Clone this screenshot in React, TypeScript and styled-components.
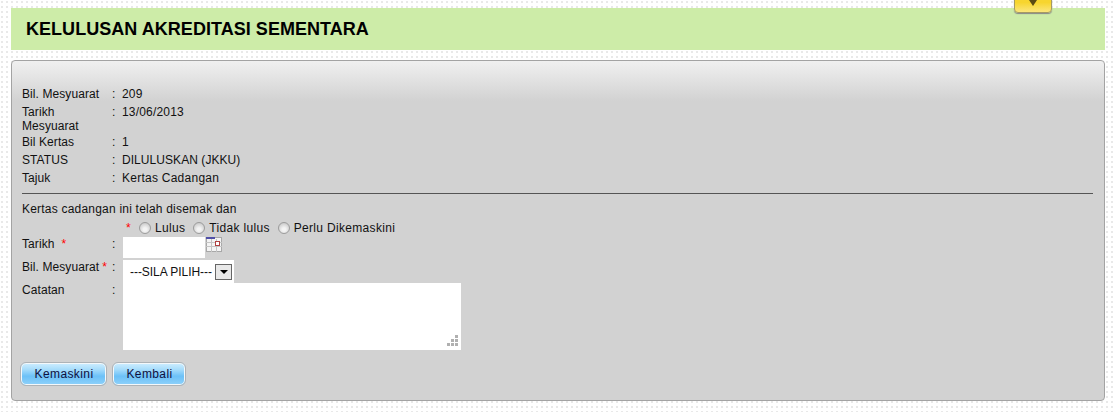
import React from 'react';
import styled, { createGlobalStyle } from 'styled-components';

const GlobalStyle = createGlobalStyle`
  html, body {
    margin: 0;
    padding: 0;
  }
  body {
    font-family: 'Liberation Sans', Arial, sans-serif;
    font-size: 12px;
    letter-spacing: 0.18px;
    color: #111;
    background-color: #fff;
    background-image: radial-gradient(circle at 2px 2px, #e9e9e9 1px, transparent 1.2px);
    background-size: 5px 5px;
  }
`;

const Page = styled.div`
  width: 1115px;
  height: 412px;
  box-sizing: border-box;
  padding: 8px 10px 0 11px;
  overflow: hidden;
  position: relative;
`;

const ToggleTab = styled.div`
  position: absolute;
  top: -8px;
  left: 1014px;
  width: 38px;
  height: 21px;
  box-sizing: border-box;
  border: 1px solid #a59a63;
  border-radius: 0 0 4px 4px;
  background: linear-gradient(#f7d52e 50%, #fbe67c);
  box-shadow: 0 1px 1px #888;
  display: flex;
  align-items: flex-end;
  justify-content: center;
  padding-bottom: 6px;
`;

const ToggleArrow = styled.div`
  width: 0;
  height: 0;
  border-left: 4px solid transparent;
  border-right: 4px solid transparent;
  border-top: 6px solid #5a4a14;
`;

const TitleBar = styled.div`
  height: 42px;
  background: #cdeca8;
  display: flex;
  align-items: center;
  padding-left: 15px;
  margin-bottom: 10px;
`;

const Title = styled.h1`
  margin: 0;
  font-size: 18px;
  font-weight: bold;
  letter-spacing: 0.04px;
  color: #000;
`;

const Panel = styled.div`
  height: 341px;
  box-sizing: border-box;
  border: 1px solid #a3a3a3;
  border-radius: 4px;
  background: linear-gradient(#f0f0f0 0, #d2d2d2 40px, #d2d2d2 100%);
  padding: 26px 0 0 10px;
`;

const InfoRow = styled.div<{ $tight?: boolean }>`
  display: grid;
  grid-template-columns: 90px 10px 1fr;
  line-height: 14px;
  padding-bottom: ${(p) => (p.$tight ? 2 : 4)}px;
`;

const LabelCell = styled.div`
  width: 86px;
  letter-spacing: 0.08px;
`;

const ValueCell = styled.div<{ $spacing?: number }>`
  letter-spacing: ${(p) => p.$spacing ?? 0.18}px;
`;

const Rule = styled.hr`
  border: 0;
  border-top: 1px solid #555;
  margin: 4px 0 8px;
  width: 1071px;
`;

const Sentence = styled.div`
  line-height: 14px;
  margin-bottom: 5px;
  letter-spacing: 0.21px;
`;

const RadioRow = styled.div`
  display: flex;
  align-items: flex-start;
  height: 16px;
  line-height: 14px;
  padding-left: 104px;
  letter-spacing: 0.32px;
`;

const Star = styled.span`
  color: #f00;
`;

const RadioStar = styled(Star)`
  margin-right: 8px;
`;

const Radio = styled.span`
  width: 12px;
  height: 12px;
  margin-top: 1px;
  box-sizing: border-box;
  border-radius: 50%;
  border: 1px solid #9c9c9c;
  background: radial-gradient(circle at 50% 65%, #f4f4f4 20%, #bdbdbd 100%);
  margin-right: 4px;
`;

const RadioLabel = styled.span`
  margin-right: 8px;
`;

const FieldRow = styled.div`
  display: grid;
  grid-template-columns: 90px 10px 1fr;
  line-height: 14px;
`;

const FieldLabel = styled.div<{ $gap?: number }>`
  display: flex;
  gap: ${(p) => p.$gap ?? 0}px;
  letter-spacing: 0.08px;
`;

const DateWrap = styled.div`
  display: flex;
  align-items: flex-start;
  margin: 0 0 2px 1px;
`;

const DateInput = styled.div`
  width: 82px;
  height: 21px;
  background: #fff;
`;

const CalendarIcon = styled.svg`
  width: 16px;
  height: 15px;
  margin-left: 1px;
  display: block;
`;

const SelectBox = styled.div`
  width: 111px;
  height: 23px;
  margin-left: 1px;
  box-sizing: border-box;
  background: #fff;
  display: flex;
  align-items: center;
  justify-content: space-between;
  padding: 0 2px 0 7px;
  letter-spacing: -0.05px;
`;

const SelectButton = styled.div`
  width: 17px;
  height: 16px;
  box-sizing: border-box;
  border: 1px solid #666;
  background: #e8e8e8;
  display: flex;
  align-items: center;
  justify-content: center;
`;

const SelectArrow = styled.div`
  width: 0;
  height: 0;
  border-left: 4px solid transparent;
  border-right: 4px solid transparent;
  border-top: 4px solid #000;
`;

const TextArea = styled.div`
  width: 338px;
  height: 67px;
  margin-left: 1px;
  background: #fff;
  position: relative;
`;

const Grip = styled.svg`
  position: absolute;
  right: 3px;
  bottom: 4px;
  width: 11px;
  height: 11px;
`;

const ButtonRow = styled.div`
  display: flex;
  gap: 5px;
  margin-top: 12px;
  margin-left: -2px;
`;

const Button = styled.button<{ $width: number }>`
  width: ${(p) => p.$width}px;
  height: 24px;
  box-sizing: border-box;
  border: 1px solid #aeb3b7;
  border-radius: 6px;
  padding: 0 0 0 1px;
  font-family: inherit;
  font-size: 12px;
  letter-spacing: 0.4px;
  color: #101040;
  box-shadow: inset 0 0 0 1px #f4f8fa;
  background: linear-gradient(#cfeeff 0, #a6dcfb 30%, #6cc1f7 60%, #8fd1fa 100%);
`;

const fields = [
  { label: 'Bil. Mesyuarat', value: '209' },
  { label: 'Tarikh Mesyuarat', value: '13/06/2013', tight: true },
  { label: 'Bil Kertas', value: '1' },
  { label: 'STATUS', value: 'DILULUSKAN (JKKU)', spacing: 0.06 },
  { label: 'Tajuk', value: 'Kertas Cadangan', spacing: 0.25 },
];

const App = () => (
  <>
    <GlobalStyle />
    <Page>
      <ToggleTab>
        <ToggleArrow />
      </ToggleTab>
      <TitleBar>
        <Title>KELULUSAN AKREDITASI SEMENTARA</Title>
      </TitleBar>
      <Panel>
        {fields.map((f) => (
          <InfoRow key={f.label} $tight={f.tight}>
            <LabelCell>{f.label}</LabelCell>
            <div>:</div>
            <ValueCell $spacing={f.spacing}>{f.value}</ValueCell>
          </InfoRow>
        ))}
        <Rule />
        <Sentence>Kertas cadangan ini telah disemak dan</Sentence>
        <RadioRow>
          <RadioStar>*</RadioStar>
          <Radio />
          <RadioLabel>Lulus</RadioLabel>
          <Radio />
          <RadioLabel>Tidak lulus</RadioLabel>
          <Radio />
          <RadioLabel>Perlu Dikemaskini</RadioLabel>
        </RadioRow>
        <FieldRow>
          <FieldLabel $gap={7}>
            Tarikh <Star>*</Star>
          </FieldLabel>
          <div>:</div>
          <DateWrap>
            <DateInput />
            <CalendarIcon viewBox="0 0 16 15">
              <rect x="0.5" y="0.5" width="15" height="14" fill="#f4f4f4" stroke="#a8a8a8" />
              <path d="M0 5.5h16M0 9.5h16M5.5 2v13M10.5 2v13" stroke="#c4c4c4" />
              <rect x="0" y="0" width="9" height="2" fill="#5050a8" />
              <rect x="9.5" y="4.5" width="4" height="4" fill="#fff" stroke="#b04040" />
            </CalendarIcon>
          </DateWrap>
        </FieldRow>
        <FieldRow>
          <FieldLabel $gap={3}>
            Bil. Mesyuarat <Star>*</Star>
          </FieldLabel>
          <div>:</div>
          <SelectBox>
            ---SILA PILIH---
            <SelectButton>
              <SelectArrow />
            </SelectButton>
          </SelectBox>
        </FieldRow>
        <FieldRow>
          <FieldLabel>Catatan</FieldLabel>
          <div>:</div>
          <TextArea>
            <Grip viewBox="0 0 11 11" fill="#b0b0b0">
              <rect x="8" y="0" width="3" height="3" />
              <rect x="4" y="4" width="3" height="3" />
              <rect x="8" y="4" width="3" height="3" />
              <rect x="0" y="8" width="3" height="3" />
              <rect x="4" y="8" width="3" height="3" />
              <rect x="8" y="8" width="3" height="3" />
            </Grip>
          </TextArea>
        </FieldRow>
        <ButtonRow>
          <Button $width={87}>Kemaskini</Button>
          <Button $width={74}>Kembali</Button>
        </ButtonRow>
      </Panel>
    </Page>
  </>
);

export default App;
